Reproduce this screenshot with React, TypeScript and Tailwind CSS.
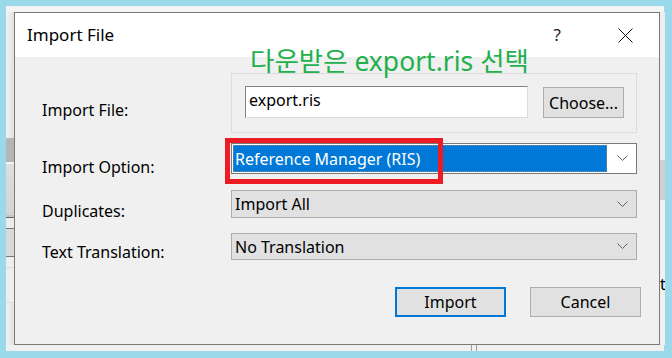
import React from "react";

const ui = { fontFamily: '"Noto Sans", "Open Sans", sans-serif' };

function Chevron() {
  return (
    <svg width="11" height="7" viewBox="0 0 11 7" className="shrink-0">
      <path d="M0.5 0.5 L5.5 5.5 L10.5 0.5" fill="none" stroke="#606060" strokeWidth="1" />
    </svg>
  );
}

function Select({ value }: { value: string }) {
  return (
    <div className="flex h-full items-center border border-[#adadad] bg-[#e1e1e1] pl-[3px] pr-[8px]">
      <span className="flex-1 text-[16px] leading-[22px] text-black">{value}</span>
      <Chevron />
    </div>
  );
}

function Row({ label, labelTop, children, className }: { label: string; labelTop: string; children: React.ReactNode; className: string }) {
  return (
    <div className={"flex shrink-0 items-start overflow-visible " + className}>
      <div className={"h-0 w-[189px] shrink-0 overflow-visible whitespace-nowrap text-[16px] leading-[22px] text-black " + labelTop}>{label}</div>
      {children}
    </div>
  );
}

export default function App() {
  return (
    <div className="w-[672px] h-[358px] overflow-hidden bg-[#99d9ea] pt-[6px] pl-[6px] pr-[8px] pb-[8px]" style={ui}>
      <div className="flex h-full flex-col bg-[#f0f0f0]">
        <div className="h-[6px] shrink-0 bg-[#f4f4f4]" />
        <div className="flex h-[333px] shrink-0">
          {/* app behind the dialog, left edge */}
          <div className="flex w-[8px] shrink-0 flex-col bg-gradient-to-r from-[#f2f2f2] to-[#e2e2e2]">
            <div className="h-[126px]" />
            <div className="h-[24px] bg-[#b5b5b5]" />
            <div className="h-[2px] bg-[#f4f4f4]" />
            <div className="h-[51px] bg-gradient-to-b from-[#dedede] to-[#d4d4d4]" />
            <div className="h-[2px] bg-[#c4c4c4]" />
            <div className="h-[1px] bg-[#6a6a6a]" />
            <div className="h-[10px] bg-[#ececec]" />
            <div className="h-[1px] bg-[#777777]" />
            <div className="h-[27px] bg-[#d8d8d8]" />
            <div className="h-[1px] bg-[#777777]" />
            <div className="h-[10px] bg-[#eeeeee]" />
            <div className="h-[1px] bg-[#dcdcdc]" />
            <div className="h-[34px] bg-[#eeeeee]" />
            <div className="h-[1px] bg-[#dcdcdc]" />
          </div>

          {/* dialog */}
          <div className="relative flex h-[333px] w-[646px] shrink-0 flex-col border border-[#7a7a7a] bg-[#f0f0f0]">
            <div className="flex h-[44px] shrink-0 items-center bg-white pl-[12px] pr-[26px]">
              <span className="flex-1 text-[17px] text-black">Import File</span>
              <span className="mr-[57px] text-[17px] text-[#222]">?</span>
              <svg width="15" height="15" viewBox="0 0 15 15">
                <path d="M0.5 0.5 L14.5 14.5 M14.5 0.5 L0.5 14.5" stroke="#111" strokeWidth="1" />
              </svg>
            </div>

            <div className="flex flex-1 flex-col pt-[16px] pl-[27px] pr-[18px]">
              <Row label="Import File:" labelTop="mt-[26px]" className="h-[60px]">
                <div className="flex h-[60px] w-[406px] items-start border border-[#dcdcdc] pl-[13px] pt-[12px]">
                  <div className="h-[32px] w-[283px] border-t border-l border-[#828282] border-r-[#dcdcdc] border-b-[#dcdcdc] border-r border-b bg-white pl-[3px] text-[16px] leading-[26px] text-black">
                    export.ris
                  </div>
                  <button className="ml-[15px] mt-[1px] h-[31px] w-[81px] border border-[#adadad] bg-[#e1e1e1] text-[16px] text-black">
                    Choose...
                  </button>
                </div>
              </Row>

              <Row label="Import Option:" labelTop="mt-[13px]" className="mt-[10px] h-[31px]">
                <div className="flex h-[31px] w-[406px] items-center border border-[#7a7a7a] bg-white p-[1px] pr-[8px]">
                  <div className="flex h-full w-[374px] items-center border border-dotted border-[#8a8a8a] bg-[#0078d7] pl-[1px] text-[16px] leading-[22px] text-white">
                    Reference Manager (RIS)
                  </div>
                  <div className="flex flex-1 justify-end">
                    <Chevron />
                  </div>
                </div>
              </Row>

              <Row label="Duplicates:" labelTop="mt-[10px]" className="mt-[16px] h-[28px]">
                <div className="h-[28px] w-[406px]">
                  <Select value="Import All" />
                </div>
              </Row>

              <Row label="Text Translation:" labelTop="mt-[8px]" className="mt-[15px] h-[27px]">
                <div className="h-[27px] w-[406px]">
                  <Select value="No Translation" />
                </div>
              </Row>

              <div className="mt-[27px] flex justify-end gap-[24px]">
                <button className="h-[30px] w-[111px] border-2 border-[#0078d7] bg-[#e1e1e1] text-[16px] text-black">Import</button>
                <button className="h-[30px] w-[111px] border border-[#adadad] bg-[#e1e1e1] text-[16px] text-black">Cancel</button>
              </div>
            </div>

            {/* annotations drawn over the screenshot */}
            <div
              className="absolute left-[235px] top-[31px] text-[26.5px] leading-[34px] text-[#22b14c]"
              style={{ fontFamily: '"Noto Sans", "Noto Sans CJK KR", sans-serif' }}
            >
              다운받은 export.ris 선택
            </div>
            <div className="absolute left-[210px] top-[125px] h-[46px] w-[218px] border-[5px] border-[#ed1c24]" />
          </div>

          {/* app behind the dialog, right edge */}
          <div className="flex w-[5px] shrink-0 flex-col bg-[#f0f0f0]">
            <div className="h-[148px] bg-[#eeeeee]" />
            <div className="h-[40px] bg-[#d0d0d0]" />
            <div className="h-[76px]" />
            <div className="h-[16px] overflow-hidden text-[16px] leading-[16px] text-black">t</div>
          </div>
        </div>
        <div className="flex h-[6px] shrink-0 bg-[#f0f0f0] pl-[465px]">
          <div className="w-[1px] bg-[#a0a0a0]" />
          <div className="w-[4px]" />
          <div className="w-[1px] bg-[#a0a0a0]" />
        </div>
      </div>
    </div>
  );
}
